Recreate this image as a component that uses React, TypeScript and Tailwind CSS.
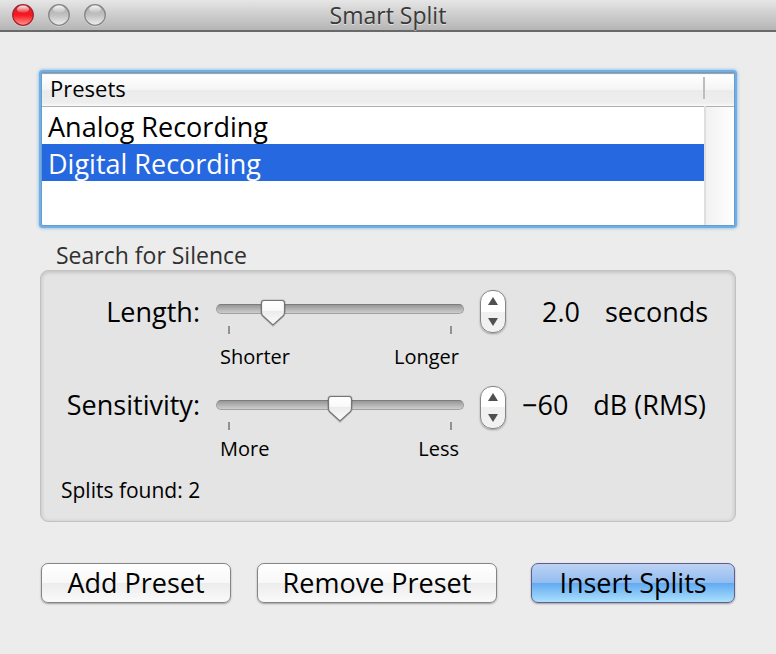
import { useState } from "react";

const presets = ["Analog Recording", "Digital Recording"];

function TrafficLight({ label, active }: { label: string; active?: boolean }) {
  const id = active ? "light-close" : "light-" + label.toLowerCase();
  return (
    <button type="button" aria-label={label} className="block h-6 w-6">
      <svg viewBox="0 0 24 24" className="h-6 w-6">
        <defs>
          <linearGradient id={id} x1="0" y1="0" x2="0" y2="1">
            <stop offset="0" stopColor={active ? "#c8303a" : "#a9a9a9"} />
            <stop offset="0.5" stopColor={active ? "#f8151f" : "#c0c0c0"} />
            <stop offset="1" stopColor={active ? "#ff9a90" : "#efefef"} />
          </linearGradient>
          <linearGradient id={id + "-shine"} x1="0" y1="0" x2="0" y2="1">
            <stop offset="0" stopColor="#fff" stopOpacity="0.9" />
            <stop offset="1" stopColor="#fff" stopOpacity="0.1" />
          </linearGradient>
        </defs>
        <circle cx="12" cy="12.8" r="10.8" fill="#fff" opacity="0.5" />
        <circle cx="12" cy="12" r="10.3" fill={`url(#${id})`} stroke={active ? "#a3242d" : "#858585"} strokeWidth="1.3" />
        <ellipse cx="12" cy="6.2" rx="6" ry="3.6" fill={`url(#${id}-shine)`} />
      </svg>
    </button>
  );
}

type SliderRowProps = {
  id: string;
  label: string;
  low: string;
  high: string;
  min: number;
  max: number;
  step: number;
  initial: number;
  format: (value: number) => string;
  unit: string;
  lineClass: string;
  readoutClass: string;
  captionClass: string;
};

function SliderRow(props: SliderRowProps) {
  const { id, label, low, high, min, max, step, initial, format, unit } = props;
  const [value, setValue] = useState(initial);
  const move = (delta: number) => setValue(Math.min(max, Math.max(min, value + delta)));
  const percent = ((value - min) / (max - min)) * 100;

  return (
    <div className="flex items-start">
      <label htmlFor={id} className={`w-[159px] shrink-0 text-right ${props.lineClass}`}>
        {label}
      </label>
      <div className="ml-4 min-w-0 flex-1 pt-[14px]">
        <div className="relative h-[10px]">
          <input
            id={id}
            type="range"
            min={min}
            max={max}
            step={step}
            value={value}
            onChange={(e) => setValue(Number(e.target.value))}
            className="block h-[10px] w-full appearance-none rounded-full border border-[#a0a0a0] border-t-[#7d7d7d] bg-linear-to-b from-[#979797] to-[#cecece] outline-none [&::-webkit-slider-thumb]:h-6 [&::-webkit-slider-thumb]:w-6 [&::-webkit-slider-thumb]:appearance-none [&::-webkit-slider-thumb]:opacity-0"
          />
          <div className="pointer-events-none absolute inset-x-3 top-0">
            <svg
              viewBox="0 0 26 28"
              className="absolute -top-[5px] h-7 w-[26px] -translate-x-1/2"
              style={{ left: `${percent}%` }}
            >
              <defs>
                <linearGradient id={id + "-thumb"} x1="0" y1="0" x2="0" y2="1">
                  <stop offset="0" stopColor="#fff" />
                  <stop offset="0.4" stopColor="#fafafa" />
                  <stop offset="0.45" stopColor="#ececec" />
                  <stop offset="1" stopColor="#fbfbfb" />
                </linearGradient>
              </defs>
              <path d="M4 1.5H22Q24.5 1.5 24.5 4V13.5Q24.5 15.5 23 17L13 26.5L3 17Q1.5 15.5 1.5 13.5V4Q1.5 1.5 4 1.5Z" fill="none" stroke="#000" strokeOpacity="0.15" strokeWidth="2.5" />
              <path d="M4 1.5H22Q24.5 1.5 24.5 4V13.5Q24.5 15.5 23 17L13 26L3 17Q1.5 15.5 1.5 13.5V4Q1.5 1.5 4 1.5Z" fill={`url(#${id}-thumb)`} stroke="#757575" strokeWidth="1.2" />
            </svg>
          </div>
        </div>
        <div className="mt-3 flex justify-between px-3">
          <span className="h-2 w-[2px] bg-[#929292]" />
          <span className="h-2 w-[2px] bg-[#929292]" />
        </div>
        <div className={`flex justify-between pr-[5px] pl-1 text-[20px] leading-[20px] ${props.captionClass}`}>
          <span>{low}</span>
          <span>{high}</span>
        </div>
      </div>
      <div className="ml-4 flex h-[43px] w-[26px] shrink-0 flex-col overflow-hidden rounded-[12px] border border-[#858585] bg-linear-to-b from-white from-50% to-[#f1f1f1] to-50% shadow-[0_1px_2px_#0005]">
        <button type="button" aria-label={`Increase ${id}`} onClick={() => move(step)} className="flex flex-1 items-center justify-center">
          <svg viewBox="0 0 10 8" className="h-2 w-[10px]"><path d="M5 0L10 8H0Z" fill="#505050" /></svg>
        </button>
        <button type="button" aria-label={`Decrease ${id}`} onClick={() => move(-step)} className="flex flex-1 items-center justify-center">
          <svg viewBox="0 0 10 8" className="h-2 w-[10px]"><path d="M5 8L10 0H0Z" fill="#505050" /></svg>
        </button>
      </div>
      <div className={`flex w-[229px] shrink-0 gap-[25px] whitespace-nowrap ${props.readoutClass} ${props.lineClass}`}>
        <output htmlFor={id}>{format(value)}</output>
        <span>{unit}</span>
      </div>
    </div>
  );
}

const plainButton =
  "h-10 rounded-[7px] border border-[#858585] bg-[linear-gradient(#ffffff,#f8f8f8_49%,#ececec_50%,#fafafa)] shadow-[0_1px_2px_#0005]";

export default function App() {
  const [selected, setSelected] = useState("Digital Recording");

  return (
    <div className="min-h-screen bg-[#ececec] font-['Open_Sans','Noto_Sans',sans-serif] text-[27px] text-black">
      <header className="grid h-8 grid-cols-[1fr_auto_1fr] items-center border-b-2 border-[#696969] bg-linear-to-b from-[#e6e6e6] to-[#b5b5b5]">
        <div className="flex gap-3 pl-[11px]">
          <TrafficLight label="Close" active />
          <TrafficLight label="Minimize" />
          <TrafficLight label="Zoom" />
        </div>
        <h1 className="text-[23px] leading-[30px] text-[#3a3a3a] text-shadow-[0_1px_0_#fff8]">Smart Split</h1>
      </header>

      <main className="px-10 pt-10 pb-[50px]">
        <div className="mx-px rounded-[2px] border border-[#639dd3] bg-white shadow-[0_0_0_2px_#74aee0,0_0_3px_3px_#9fc8ea]">
          <table className="w-full table-fixed border-collapse text-left">
            <colgroup>
              <col />
              <col className="w-[29px]" />
            </colgroup>
            <thead>
              <tr className="h-[33px] border-t border-b border-t-[#a3a3a3] border-b-[#b0b0b0] bg-[linear-gradient(#ffffff,#f4f4f4_49%,#ebebeb_50%,#eeeeee_90%,#fafafa)]">
                <th scope="col" className="p-0 pb-1 pl-2 text-[22px] leading-[28px] font-normal">
                  <div className="flex items-center justify-between">
                    Presets
                    <span className="h-[22px] w-[2px] bg-[#bdbdbd]" />
                  </div>
                </th>
                <td className="p-0" />
              </tr>
            </thead>
            <tbody>
              {presets.map((name, i) => (
                <tr key={name} aria-selected={name === selected} onClick={() => setSelected(name)} className="h-[37px]">
                  <td className={`p-0 pt-[2px] pl-[6px] leading-[35px] ${name === selected ? "bg-[#2668e0] text-white" : ""}`}>{name}</td>
                  {i === 0 && (
                    <td rowSpan={3} className="border-l-2 border-[#dedede] bg-linear-to-r from-[#f1f1f1] to-white p-0" />
                  )}
                </tr>
              ))}
              <tr className="h-[44px]">
                <td className="p-0" />
              </tr>
            </tbody>
          </table>
        </div>

        <section aria-labelledby="silence">
          <h2 id="silence" className="mt-[15px] mb-px pl-4 text-[23px] leading-[28px] text-[#303030]">
            Search for Silence
          </h2>
          <div className="rounded-[8px] border border-[#c2c2c2] bg-[#e4e4e4] pt-[19px] pb-[17px] shadow-[inset_0_1px_4px_#0003]">
            <SliderRow
              id="length" label="Length:" low="Shorter" high="Longer"
              min={0} max={10} step={0.1} initial={2}
              format={(v) => v.toFixed(1)} unit="seconds"
              lineClass="leading-[43px]" readoutClass="pl-9" captionClass="mt-[13px]"
            />
            <div className="mt-[19px]">
              <SliderRow
                id="sensitivity" label="Sensitivity:" low="More" high="Less"
                min={-120} max={0} step={1} initial={-60}
                format={(v) => (v < 0 ? "−" : "") + Math.abs(v)} unit="dB (RMS)"
                lineClass="leading-[37px]" readoutClass="pl-4" captionClass="mt-[9px]"
              />
            </div>
            <p className="mt-[17px] pl-5 text-[21px] leading-[28px]">Splits found: 2</p>
          </div>
        </section>

        <div className="mt-[41px] flex items-center px-px leading-[36px]">
          <button type="button" className={`${plainButton} w-[190px]`}>Add Preset</button>
          <button type="button" className={`${plainButton} ml-[26px] w-[240px]`}>Remove Preset</button>
          <button
            type="button"
            className="ml-auto h-10 w-[204px] rounded-[7px] border border-[#5d5d90] bg-[linear-gradient(#bdd2f3,#93bdf0_49%,#60a9f2_50%,#abe0fc)] shadow-[0_1px_2px_#0005]"
          >
            Insert Splits
          </button>
        </div>
      </main>
    </div>
  );
}
